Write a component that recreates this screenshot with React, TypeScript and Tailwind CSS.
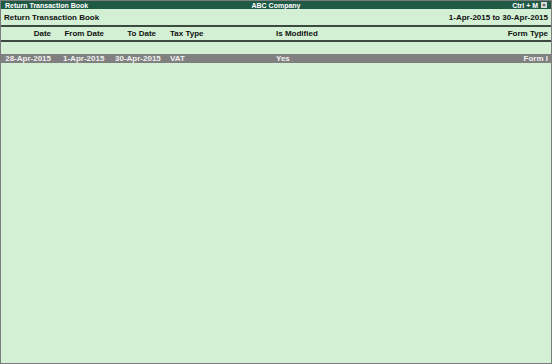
const columns = [
  { label: 'Date', cls: 'w-[50px] text-right' },
  { label: 'From Date', cls: 'ml-[12px] w-[41px] text-right' },
  { label: 'To Date', cls: 'ml-[11px] w-[41px] text-right' },
  { label: 'Tax Type', cls: 'ml-[14px] w-[106px]' },
  { label: 'Is Modified', cls: 'flex-1' },
  { label: 'Form Type', cls: 'text-right' },
];

const row = ['28-Apr-2015', '1-Apr-2015', '30-Apr-2015', 'VAT', 'Yes', 'Form I'];

export default function App() {
  return (
    <div
      className="flex h-[364px] w-[552px] flex-col whitespace-nowrap border border-[#7c7c7c] bg-[#d3f0d5] text-[#111]"
      style={{ fontFamily: '"Liberation Sans", Arial, sans-serif' }}
    >
      <div className="flex h-[8px] items-center bg-[#1f5a45] px-[4px] text-[7px] font-bold leading-none text-white">
        <span className="flex-1">Return Transaction Book</span>
        <span className="flex-1 text-center">ABC Company</span>
        <span className="flex flex-1 items-center justify-end gap-[3px]">
          Ctrl + M
          <span className="flex h-[6px] w-[6px] items-center justify-center bg-[#d8d8d8] text-[6px] text-[#333]">×</span>
        </span>
      </div>

      <div className="flex h-[18px] items-center justify-between border-b-2 border-[#3d4a3f] px-[3px] pt-[1px] text-[8px] font-bold">
        <span>Return Transaction Book</span>
        <span>1-Apr-2015 to 30-Apr-2015</span>
      </div>

      <div className="flex h-[15px] items-center border-b-2 border-[#3d4a3f] pr-[3px] pt-[1px] text-[8px] font-bold">
        {columns.map((c) => (
          <span key={c.label} className={c.cls}>{c.label}</span>
        ))}
      </div>

      <div className="h-[12px]" />

      <div className="flex h-[9px] items-center bg-[#808080] pr-[3px] text-[8px] font-bold leading-none text-[#f0f0f0]">
        {row.map((v, i) => (
          <span key={i} className={columns[i].cls}>{v}</span>
        ))}
      </div>
    </div>
  );
}
